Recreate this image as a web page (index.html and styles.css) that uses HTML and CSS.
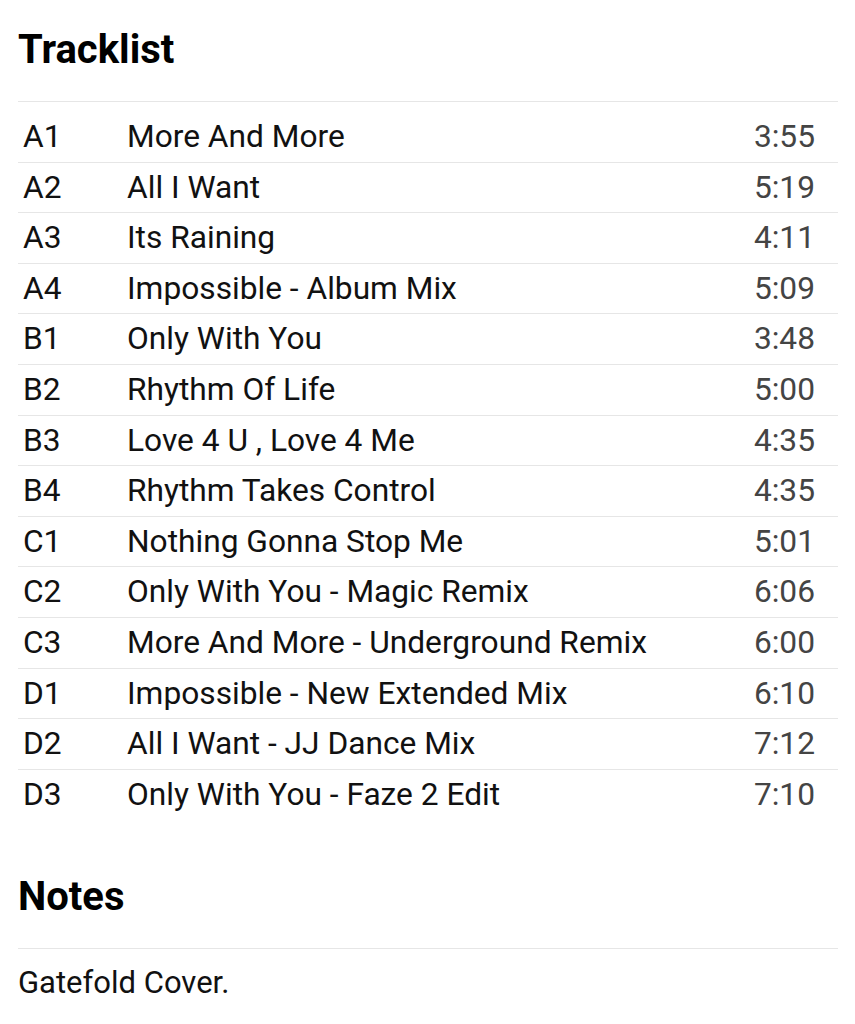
FILE: index.html
```html
<!DOCTYPE html>
<html lang="en">
<head>
<meta charset="utf-8">
<title>Tracklist</title>
<link rel="stylesheet" href="styles.css">
</head>
<body>
<main class="page">
  <section class="section">
    <h2 class="section-title">Tracklist</h2>
    <div class="tracklist">
      <div class="track"><span class="pos">A1</span><span class="title">More And More</span><span class="dur">3:55</span></div>
      <div class="track"><span class="pos">A2</span><span class="title">All I Want</span><span class="dur">5:19</span></div>
      <div class="track"><span class="pos">A3</span><span class="title">Its Raining</span><span class="dur">4:11</span></div>
      <div class="track"><span class="pos">A4</span><span class="title">Impossible - Album Mix</span><span class="dur">5:09</span></div>
      <div class="track"><span class="pos">B1</span><span class="title">Only With You</span><span class="dur">3:48</span></div>
      <div class="track"><span class="pos">B2</span><span class="title">Rhythm Of Life</span><span class="dur">5:00</span></div>
      <div class="track"><span class="pos">B3</span><span class="title">Love 4 U , Love 4 Me</span><span class="dur">4:35</span></div>
      <div class="track"><span class="pos">B4</span><span class="title">Rhythm Takes Control</span><span class="dur">4:35</span></div>
      <div class="track"><span class="pos">C1</span><span class="title">Nothing Gonna Stop Me</span><span class="dur">5:01</span></div>
      <div class="track"><span class="pos">C2</span><span class="title">Only With You - Magic Remix</span><span class="dur">6:06</span></div>
      <div class="track"><span class="pos">C3</span><span class="title">More And More - Underground Remix</span><span class="dur">6:00</span></div>
      <div class="track"><span class="pos">D1</span><span class="title">Impossible - New Extended Mix</span><span class="dur">6:10</span></div>
      <div class="track"><span class="pos">D2</span><span class="title">All I Want - JJ Dance Mix</span><span class="dur">7:12</span></div>
      <div class="track"><span class="pos">D3</span><span class="title">Only With You - Faze 2 Edit</span><span class="dur">7:10</span></div>
    </div>
  </section>
  <section class="section notes">
    <h2 class="section-title">Notes</h2>
    <p class="notes-text">Gatefold Cover.</p>
  </section>
</main>
</body>
</html>
```

FILE: styles.css
```css
html, body {
  margin: 0;
  padding: 0;
  background: #ffffff;
}

body {
  font-family: Roboto, "Liberation Sans", Arial, sans-serif;
  color: #111111;
}

.page {
  padding: 26px 17px 0 18px;
}

.section-title {
  margin: 0;
  font-size: 40px;
  font-weight: 700;
  line-height: normal;
  color: #000000;
  padding-bottom: 28px;
  border-bottom: 1px solid #e6e6e6;
}

.tracklist {
  padding-top: 10px;
}

.track {
  display: grid;
  grid-template-columns: 109px 1fr auto;
  align-items: baseline;
  font-size: 31.7px;
  line-height: 37.6px;
  padding: 6px 23px 6px 0;
}

.track + .track {
  border-top: 1px solid #e6e6e6;
}

.pos {
  padding-left: 5px;
  color: #111111;
}

.title {
  color: #111111;
}

.dur {
  color: #444444;
  text-align: right;
}

.notes {
  margin-top: 54px;
}

.notes-text {
  margin: 0;
  padding-top: 15px;
  font-size: 31px;
  line-height: normal;
  color: #111111;
}
```
